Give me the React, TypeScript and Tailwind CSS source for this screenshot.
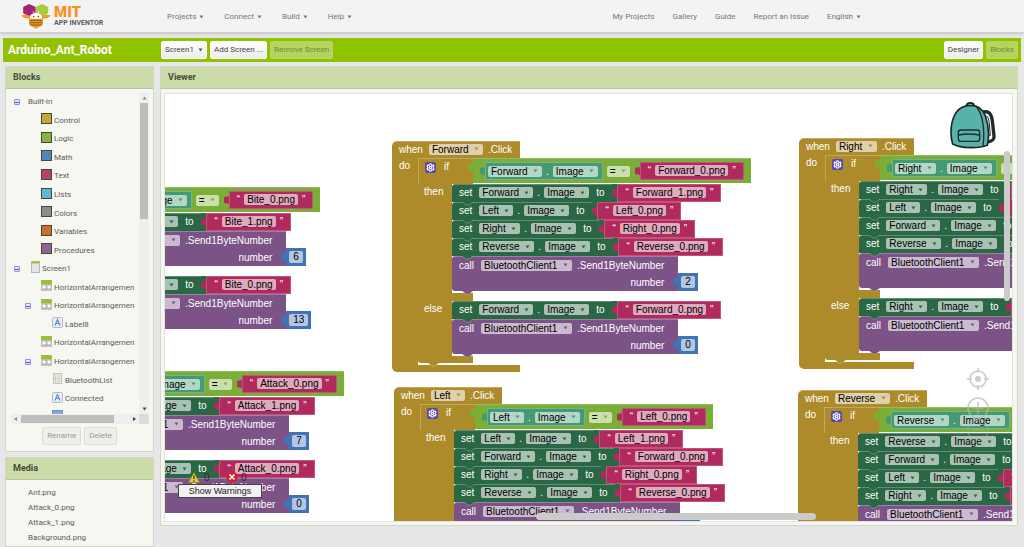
import React from 'react';
import clsx from 'clsx';
import { Settings } from 'lucide-react';

type Tone = { bg: string; fill: string };

const control: Tone = { bg: 'bg-[#ad8b2b]', fill: 'fill-[#ad8b2b]' };
const logic: Tone = { bg: 'bg-[#7bae36]', fill: 'fill-[#7bae36]' };
const math: Tone = { bg: 'bg-[#4173b6]', fill: 'fill-[#4173b6]' };
const textTone: Tone = { bg: 'bg-[#b02a5d]', fill: 'fill-[#b02a5d]' };
const setter: Tone = { bg: 'bg-[#2a6744]', fill: 'fill-[#2a6744]' };
const getter: Tone = { bg: 'bg-[#459a71]', fill: 'fill-[#459a71]' };
const method: Tone = { bg: 'bg-[#7c5386]', fill: 'fill-[#7c5386]' };

const Caret: React.FC<{ className?: string }> = ({ className }) => (
  <svg viewBox="0 0 6 5" className={clsx('h-[4px] w-[5px]', className)} aria-hidden="true">
    <path d="M0.5 0.5H5.5L3 4.5Z" />
  </svg>
);

/* ---------- Block primitives ---------- */

const Notch: React.FC<{ tone: Tone }> = ({ tone }) => (
  <svg viewBox="0 0 11 4" className="absolute top-full left-[10px] z-10 h-[4px] w-[11px]" aria-hidden="true">
    <path d="M0 0L4 3H7L11 0Z" className={tone.fill} />
    <path d="M0 0L4 3H7L11 0" fill="none" stroke="#fff" strokeOpacity="0.3" strokeWidth="0.8" />
  </svg>
);

const Plug: React.FC<{ tone: Tone }> = ({ tone }) => (
  <svg viewBox="0 0 5 10" className="mt-[4px] h-[10px] w-[5px] shrink-0 self-start" aria-hidden="true">
    <path d="M5 0C5 2 3 1.5 1.5 1.5C0 1.5 0 3 0 5C0 7 0 8.5 1.5 8.5C3 8.5 5 8 5 10Z" className={tone.fill} />
  </svg>
);

const Picker: React.FC<{ value: string; tone: Tone; label: string }> = ({ value, tone, label }) => (
  <span className="relative flex items-center">
    <select
      aria-label={label}
      className="h-[11px] appearance-none rounded-[2px] bg-white/60 pr-[14px] pl-[3px] text-[10px] leading-[11px] text-black"
    >
      <option>{value}</option>
    </select>
    <Caret className={clsx('pointer-events-none absolute right-[4px]', tone.fill)} />
  </span>
);

const TextBlock: React.FC<{ value: string }> = ({ value }) => (
  <div className="flex h-[18px]">
    <Plug tone={textTone} />
    <div className={clsx('flex items-center gap-1 border border-white/20 px-[7px] pb-px', textTone.bg)}>
      <span>“</span>
      <input
        aria-label="Text value"
        defaultValue={value}
        className="field-sizing-content h-[11px] rounded-[2px] bg-white/60 px-[3px] text-[10px] leading-[11px] text-black"
      />
      <span>”</span>
    </div>
  </div>
);

const NumberBlock: React.FC<{ value: string }> = ({ value }) => (
  <div className="flex h-[18px]">
    <Plug tone={math} />
    <div className={clsx('flex items-center px-[3px]', math.bg)}>
      <input
        aria-label="Number value"
        defaultValue={value}
        className="field-sizing-content h-[12px] rounded-[2px] bg-white/60 px-1 text-[10px] leading-[12px] text-black"
      />
    </div>
  </div>
);

const SetBlock: React.FC<{ component: string; image: string }> = ({ component, image }) => (
  <div className="relative flex h-[18px]">
    <div className={clsx('flex items-center rounded-tl-[3px] border-t border-white/25 pb-[2px] pl-[7px]', setter.bg)}>
      <span className="mr-[7px]">set</span>
      <Picker value={component} tone={setter} label="Component" />
      <span className="mx-1">.</span>
      <Picker value="Image" tone={setter} label="Property" />
      <span className="mr-2 ml-[7px]">to</span>
    </div>
    <div className={clsx('flex', setter.bg)}>
      <TextBlock value={image} />
    </div>
    <Notch tone={setter} />
  </div>
);

const CallBlock: React.FC<{ number: string }> = ({ number }) => (
  <div className="relative flex h-[35px] items-end">
    <div className={clsx('h-[35px] rounded-l-[3px] border-t border-white/25 pl-[7px]', method.bg)}>
      <div className="flex h-[16px] items-center pr-[14px]">
        <span className="mr-[7px]">call</span>
        <Picker value="BluetoothClient1" tone={method} label="Component" />
        <span className="ml-[5px]">.Send1ByteNumber</span>
      </div>
      <div className="flex h-[18px] items-center justify-end pr-[14px]">number</div>
    </div>
    <div className="-ml-[5px]">
      <NumberBlock value={number} />
    </div>
    <Notch tone={method} />
  </div>
);

const CompareBlock: React.FC<{ component: string; image: string }> = ({ component, image }) => (
  <div className="-ml-[5px] flex h-[25px]">
    <Plug tone={logic} />
    <div className={clsx('flex items-center border-t border-white/20 px-[7px]', logic.bg)}>
      <div className="flex h-[18px]">
        <Plug tone={getter} />
        <div className={clsx('flex items-center border border-white/25 pr-1 pl-[2px]', getter.bg)}>
          <Picker value={component} tone={getter} label="Component" />
          <span className="mx-1">.</span>
          <Picker value="Image" tone={getter} label="Property" />
        </div>
      </div>
      <div className="mr-[5px] ml-1">
        <Picker value="=" tone={logic} label="Comparison" />
      </div>
      <TextBlock value={image} />
    </div>
  </div>
);

type Handler = {
  name: string;
  place: string;
  test: string;
  then: [string, string][];
  thenNumber: string;
  otherwise: string;
  elseNumber: string;
};

const Branch: React.FC<{ label: string; children: React.ReactNode }> = ({ label, children }) => (
  <div className="flex">
    <div className={clsx('w-[34px] shrink-0 pt-[2px] pl-[6px] leading-[12px]', control.bg)}>{label}</div>
    <div className="pb-[2px]">{children}</div>
  </div>
);

const EventBlock: React.FC<{ handler: Handler }> = ({ handler }) => (
  <div className={clsx('absolute grid whitespace-nowrap', handler.place)}>
    {/* Hat */}
    <div className={clsx('flex h-[17px] items-center rounded-tl-[5px] border-t border-white/25 pr-2 pb-[2px] pl-[7px]', control.bg)}>
      <span className="mr-[6px]">when</span>
      <Picker value={handler.name} tone={control} label="Event source" />
      <span className="ml-[5px]">.Click</span>
    </div>
    {/* Body */}
    <div className="flex w-0">
      <div className={clsx('w-[26px] shrink-0 pt-[2px] pl-[7px] leading-[12px]', control.bg)}>do</div>
      <div className="shrink-0 pb-[2px]">
        <div className="relative">
          <div className="flex h-[26px] items-start">
            <div
              className={clsx(
                'flex h-[26px] w-[55px] shrink-0 items-start border-t border-l border-white/25 pt-[3px] pl-[6px]',
                control.bg,
              )}
            >
              <button
                aria-label="Edit if block"
                className="flex h-[11px] w-[11px] items-center justify-center rounded-[2px] bg-[#5847ad] text-white"
              >
                <Settings size={9} strokeWidth={3} />
              </button>
              <span className="ml-2 leading-[10px]">if</span>
            </div>
            <CompareBlock component={handler.name} image={handler.test} />
          </div>
          <Branch label="then">
            {handler.then.map(([component, image]) => (
              <SetBlock key={component} component={component} image={image} />
            ))}
            <CallBlock number={handler.thenNumber} />
          </Branch>
          <div className={clsx('h-[8px] w-[55px]', control.bg)} />
          <Branch label="else">
            <SetBlock component={handler.name} image={handler.otherwise} />
            <CallBlock number={handler.elseNumber} />
          </Branch>
          <div className={clsx('h-[7px] w-[55px] rounded-bl-[3px]', control.bg)} />
          <Notch tone={control} />
        </div>
      </div>
    </div>
    <div className={clsx('h-[7px] rounded-bl-[5px]', control.bg)} />
  </div>
);

const handlers: Handler[] = [
  {
    name: 'Bite',
    place: '-left-[165px] top-[76px]',
    test: 'Bite_0.png',
    then: [['Bite', 'Bite_1.png']],
    thenNumber: '6',
    otherwise: 'Bite_0.png',
    elseNumber: '13',
  },
  {
    name: 'Attack',
    place: '-left-[162px] top-[260px]',
    test: 'Attack_0.png',
    then: [['Attack', 'Attack_1.png']],
    thenNumber: '7',
    otherwise: 'Attack_0.png',
    elseNumber: '0',
  },
  {
    name: 'Forward',
    place: 'left-[227px] top-[47px]',
    test: 'Forward_0.png',
    then: [
      ['Forward', 'Forward_1.png'],
      ['Left', 'Left_0.png'],
      ['Right', 'Right_0.png'],
      ['Reverse', 'Reverse_0.png'],
    ],
    thenNumber: '2',
    otherwise: 'Forward_0.png',
    elseNumber: '0',
  },
  {
    name: 'Left',
    place: 'left-[229px] top-[293px]',
    test: 'Left_0.png',
    then: [
      ['Left', 'Left_1.png'],
      ['Forward', 'Forward_0.png'],
      ['Right', 'Right_0.png'],
      ['Reverse', 'Reverse_0.png'],
    ],
    thenNumber: '4',
    otherwise: 'Left_0.png',
    elseNumber: '0',
  },
  {
    name: 'Right',
    place: 'left-[634px] top-[44px]',
    test: 'Right_0.png',
    then: [
      ['Right', 'Right_1.png'],
      ['Left', 'Left_0.png'],
      ['Forward', 'Forward_0.png'],
      ['Reverse', 'Reverse_0.png'],
    ],
    thenNumber: '3',
    otherwise: 'Right_0.png',
    elseNumber: '0',
  },
  {
    name: 'Reverse',
    place: 'left-[633px] top-[296px]',
    test: 'Reverse_0.png',
    then: [
      ['Reverse', 'Reverse_1.png'],
      ['Forward', 'Forward_0.png'],
      ['Left', 'Left_0.png'],
      ['Right', 'Right_0.png'],
    ],
    thenNumber: '5',
    otherwise: 'Reverse_0.png',
    elseNumber: '0',
  },
];

/* ---------- Workspace overlays ---------- */

const Backpack: React.FC = () => (
  <svg viewBox="0 0 138 142" className="h-[48px] w-[46px]" aria-hidden="true">
    <path d="M100 32C118 28 124 38 127 58L132 104C133 116 126 120 112 122" fill="none" stroke="#1f2a2c" strokeWidth="10" />
    <path d="M106 44C114 42 116 54 118 66L121 102L112 106Z" fill="#e8eeee" stroke="#1f2a2c" strokeWidth="3" />
    <path d="M50 14C50 2 72 2 72 14" fill="none" stroke="#1f2a2c" strokeWidth="6" />
    <path
      d="M8 128C-1 100 2 58 18 34C30 16 46 12 62 12C84 12 98 22 106 44C116 72 118 104 112 132C86 142 34 142 8 128Z"
      fill="#57b3aa"
      stroke="#1f2a2c"
      strokeWidth="5"
    />
    <path d="M78 15C96 34 106 80 99 136" fill="none" stroke="#1f2a2c" strokeWidth="4" />
    <rect x="25" y="86" width="64" height="34" rx="8" fill="#57b3aa" stroke="#1f2a2c" strokeWidth="4" />
    <path d="M26 101C46 97 68 97 88 101" fill="none" stroke="#1f2a2c" strokeWidth="4" />
  </svg>
);

const WorkspaceControls: React.FC = () => (
  <div className="absolute right-[22px] bottom-[80px] flex flex-col items-center text-[#b8b8b8] opacity-70">
    <button aria-label="Center blocks" className="h-[22px] w-[24px]">
      <svg viewBox="0 0 24 22" fill="none" stroke="currentColor" strokeWidth="1.6">
        <circle cx="12" cy="11" r="8" />
        <circle cx="12" cy="11" r="3" fill="currentColor" stroke="none" />
        <path d="M12 0V5M12 17V22M1 11H6M18 11H23" />
      </svg>
    </button>
    <button aria-label="Zoom in" className="mt-[7px] h-[22px] w-[24px]">
      <svg viewBox="0 0 24 22" fill="none" stroke="currentColor" strokeWidth="1.6">
        <circle cx="12" cy="11" r="10" />
        <path d="M12 5V17M6 11H18" />
      </svg>
    </button>
    <button aria-label="Zoom out" className="h-[22px] w-[24px] opacity-40">
      <svg viewBox="0 0 24 22" fill="none" stroke="currentColor" strokeWidth="1.6">
        <circle cx="12" cy="11" r="10" />
        <path d="M6 11H18" />
      </svg>
    </button>
  </div>
);

const Warnings: React.FC = () => (
  <div className="absolute bottom-[23px] left-[13px] text-[10px] text-[#3b2140]">
    <div className="flex h-[14px] items-center pl-[10px]">
      <svg viewBox="0 0 12 11" className="h-[11px] w-[12px]" aria-hidden="true">
        <path d="M6 0.5L11.5 10.5H0.5Z" fill="#dccb3d" stroke="#8f8426" strokeWidth="0.6" />
        <path d="M6 3.5V7M6 8.2V9.4" stroke="#3d3a12" strokeWidth="1.2" />
      </svg>
      <span className="ml-1 w-[20px]">0</span>
      <svg viewBox="0 0 12 12" className="ml-[2px] h-[12px] w-[12px]" aria-hidden="true">
        <circle cx="6" cy="6" r="5.6" fill="#d3202c" />
        <path d="M3.5 3.5L8.5 8.5M8.5 3.5L3.5 8.5" stroke="#fff" strokeWidth="1.6" />
      </svg>
      <span className="ml-[3px]">0</span>
    </div>
    <button className="flex h-[14px] w-[84px] items-center justify-center border border-[#444] bg-[#f1f1f1] text-[9px] text-[#222]">
      Show Warnings
    </button>
  </div>
);

/* ---------- Chrome ---------- */

const Logo: React.FC = () => (
  <a href="#home" className="flex w-[146px] shrink-0 items-center gap-[3px]">
    <svg viewBox="0 0 90 76" className="h-[25px] w-[30px]" aria-hidden="true">
      <path d="M24 0L44 9V28L26 38L6 28V9Z" fill="#a5217b" />
      <path d="M64 0L82 9V28L64 38L44 28V9Z" fill="#a9cc3a" />
      <path d="M0 36C8 31 20 32 30 38L28 44C16 46 6 42 0 36Z" fill="#f49a20" />
      <path d="M90 36C82 31 70 32 60 38L62 44C74 46 84 42 90 36Z" fill="#f49a20" />
      <path d="M36 22L41 30M54 22L49 30" stroke="#fff" strokeWidth="2.5" />
      <path d="M27 44C24 32 34 28 45 28C56 28 66 32 63 44Z" fill="#fff" />
      <circle cx="38" cy="38" r="2.5" fill="#5b4a36" />
      <circle cx="52" cy="38" r="2.5" fill="#5b4a36" />
      <path d="M25 45H65L66 62L45 75L24 62Z" fill="#f49a20" />
      <path d="M25 50H65M25 57H65M27 64H63" stroke="#6d4a23" strokeWidth="2.5" />
    </svg>
    <span className="flex flex-col items-start pt-px">
      <span className="text-[15px] leading-[13px] font-black text-[#f5921e]">MIT</span>
      <span className="text-[7px] leading-[9px] font-bold whitespace-nowrap text-[#5d5d5d]">APP INVENTOR</span>
    </span>
  </a>
);

const menus = ['Projects', 'Connect', 'Build', 'Help'];
const links = ['My Projects', 'Gallery', 'Guide', 'Report an Issue'];

const MenuButton: React.FC<{ label: string }> = ({ label }) => (
  <button className="flex items-center gap-[3px] whitespace-nowrap">
    {label}
    <Caret className="fill-[#777]" />
  </button>
);

const BarButton: React.FC<{ disabled?: boolean; children: React.ReactNode }> = ({ disabled, children }) => (
  <button
    disabled={disabled}
    className={clsx(
      'flex h-[18px] items-center gap-1 rounded-[2px] border px-[3px] whitespace-nowrap',
      disabled
        ? 'border-[#b4d566] bg-[#b4d45f] text-[#6f8b35]'
        : 'border-white bg-gradient-to-b from-white to-[#ececec] text-[#444]',
    )}
  >
    {children}
  </button>
);

const PanelTitle: React.FC<{ children: React.ReactNode }> = ({ children }) => (
  <h2 className="flex h-[22px] shrink-0 items-center border-b border-[#b9c2a2] bg-[#ccdca8] pl-[7px] text-[9px] font-bold text-[#454b39]">
    {children}
  </h2>
);

const ComponentIcon: React.FC<{ kind: string }> = ({ kind }) => {
  if (kind === 'arrangement') {
    return (
      <svg viewBox="0 0 11 11" className="h-[11px] w-[11px]" aria-hidden="true">
        <rect x="0.5" y="0.5" width="10" height="10" fill="#b9bbb2" stroke="#c3c5bb" />
        <rect x="0" y="0" width="11" height="4" fill="#96c22f" />
        <rect x="1.5" y="5.5" width="3" height="3" rx="1" fill="#fff" />
        <rect x="6.5" y="5.5" width="3" height="3" rx="1" fill="#fff" />
      </svg>
    );
  }
  if (kind === 'label') {
    return (
      <svg viewBox="0 0 11 11" className="h-[11px] w-[11px]" aria-hidden="true">
        <rect x="0.5" y="0.5" width="10" height="10" rx="1" fill="#e9edf3" stroke="#b5b9c0" />
        <path d="M3 8.5L5.5 2.5L8 8.5M4 6.5H7" fill="none" stroke="#5c8fd8" strokeWidth="1.2" />
      </svg>
    );
  }
  if (kind === 'list') {
    return (
      <svg viewBox="0 0 11 11" className="h-[11px] w-[11px]" aria-hidden="true">
        <rect x="1.5" y="0.5" width="8" height="10" fill="#e9eae4" stroke="#c2c5bc" />
        <path d="M3 3H4M3 5.5H4M3 8H4" stroke="#8fbf2c" />
        <path d="M5 3H8M5 5.5H8M5 8H8" stroke="#c6c8c0" />
      </svg>
    );
  }
  if (kind === 'button') {
    return (
      <svg viewBox="0 0 11 11" className="h-[11px] w-[11px]" aria-hidden="true">
        <rect x="0.5" y="0.5" width="10" height="10" fill="#7fa9e0" stroke="#6f8fbd" />
      </svg>
    );
  }
  return (
    <svg viewBox="0 0 9 12" className="h-[12px] w-[9px]" aria-hidden="true">
      <rect x="0.5" y="0.5" width="8" height="11" fill="#e6e7e0" stroke="#b5b8ae" />
      <rect x="0.5" y="0.5" width="8" height="2" fill="#9cc63c" />
    </svg>
  );
};

const Toggle: React.FC<{ name: string }> = ({ name }) => (
  <button
    aria-label={`Collapse ${name}`}
    className="flex h-[6px] w-[6px] items-center justify-center rounded-[1px] border border-[#8f93d8] bg-[#e4e5fb]"
  >
    <span className="h-px w-[4px] bg-[#5257c8]" />
  </button>
);

const tree = [
  { name: 'Built-in', indent: 'pl-[3px]', open: true },
  { name: 'Control', indent: 'pl-[30px]', swatch: 'bg-[#c4a63b]' },
  { name: 'Logic', indent: 'pl-[30px]', swatch: 'bg-[#84b546]' },
  { name: 'Math', indent: 'pl-[30px]', swatch: 'bg-[#5585bd]' },
  { name: 'Text', indent: 'pl-[30px]', swatch: 'bg-[#b8406e]' },
  { name: 'Lists', indent: 'pl-[30px]', swatch: 'bg-[#5fb5da]' },
  { name: 'Colors', indent: 'pl-[30px]', swatch: 'bg-[#8c8c8c]' },
  { name: 'Variables', indent: 'pl-[30px]', swatch: 'bg-[#d06e2f]' },
  { name: 'Procedures', indent: 'pl-[30px]', swatch: 'bg-[#8a6595]' },
  { name: 'Screen1', indent: 'pl-[3px]', open: true, icon: 'screen' },
  { name: 'HorizontalArrangemen', indent: 'pl-[30px]', icon: 'arrangement' },
  { name: 'HorizontalArrangemen', indent: 'pl-[14px]', open: true, icon: 'arrangement' },
  { name: 'Label8', indent: 'pl-[41px]', icon: 'label' },
  { name: 'HorizontalArrangemen', indent: 'pl-[30px]', icon: 'arrangement' },
  { name: 'HorizontalArrangemen', indent: 'pl-[14px]', open: true, icon: 'arrangement' },
  { name: 'BluetoothList', indent: 'pl-[41px]', icon: 'list' },
  { name: 'Connected', indent: 'pl-[41px]', icon: 'label' },
  { name: 'Disconnect', indent: 'pl-[41px]', icon: 'button' },
];

const media = ['Ant.png', 'Attack_0.png', 'Attack_1.png', 'Background.png'];

const BlocksPanel: React.FC = () => (
  <section className="flex min-h-0 flex-1 flex-col border border-[#d3d5cd] bg-[#f6f7f0]">
    <PanelTitle>Blocks</PanelTitle>
    <div className="mt-1 mr-1 ml-[5px] flex min-h-0 flex-1">
      <div className="min-w-0 flex-1 overflow-hidden">
        <ul className="grid h-[334px] auto-rows-fr">
          {tree.map((node, i) => (
            <li key={i} className={clsx('flex items-center whitespace-nowrap', node.indent)}>
              {node.open && <Toggle name={node.name} />}
              {node.open && <span className={node.icon === 'screen' ? 'w-[11px]' : node.icon ? 'w-[10px]' : 'w-[6px]'} />}
              {node.swatch && <span className={clsx('mb-1 h-[11px] w-[11px] border border-[#4a4634]', node.swatch)} />}
              {node.icon && (
                <span className="mb-1">
                  <ComponentIcon kind={node.icon} />
                </span>
              )}
              <a href="#block" className="ml-[2px]">
                {node.name}
              </a>
            </li>
          ))}
        </ul>
      </div>
      {/* Vertical scrollbar */}
      <div className="flex w-[10px] shrink-0 flex-col items-center bg-[#efefef] py-[3px]">
        <Caret className="rotate-180 fill-[#8a8a8a]" />
        <div className="mt-[3px] h-[116px] w-[8px] bg-[#bdbdbd]" />
        <Caret className="mt-auto fill-[#444]" />
      </div>
    </div>
    {/* Horizontal scrollbar */}
    <div className="mr-1 ml-[5px] flex h-[10px] shrink-0">
      <div className="flex min-w-0 flex-1 items-center bg-[#efefef] px-[2px]">
        <Caret className="rotate-90 fill-[#8a8a8a]" />
        <div className="ml-[3px] h-[8px] w-[93px] bg-[#bdbdbd]" />
        <Caret className="ml-auto -rotate-90 fill-[#444]" />
      </div>
      <div className="w-[10px] bg-[#dcdcdc]" />
    </div>
    <div className="flex shrink-0 justify-center gap-[3px] pt-[3px] pb-[6px] text-[#999]">
      {['Rename', 'Delete'].map((label) => (
        <button key={label} className="h-[18px] rounded-[2px] border border-[#dcdcd8] bg-[#efefeb] px-1">
          {label}
        </button>
      ))}
    </div>
  </section>
);

const App: React.FC = () => (
  <div className="flex h-screen flex-col overflow-hidden bg-[#e7e7e7] font-['Roboto',sans-serif] text-[8px] text-[#5c5c5c]">
    <header className="flex h-[33px] shrink-0 items-center border-b border-[#d2d2d2] bg-[#f3f3f3] pl-[21px] text-[#777] shadow-sm">
      <Logo />
      <nav className="flex flex-1 items-center gap-5 pt-[2px]">
        {menus.map((label) => (
          <MenuButton key={label} label={label} />
        ))}
      </nav>
      <nav className="mr-[163px] flex items-center gap-[18px] pt-[2px] whitespace-nowrap">
        {links.map((label) => (
          <a key={label} href="#link">
            {label}
          </a>
        ))}
        <MenuButton label="English" />
      </nav>
    </header>

    <div className="mx-[3px] mt-[5px] flex h-[24px] shrink-0 items-center gap-[3px] bg-[#90c200] pr-[3px] pl-[5px]">
      <h1 className="w-[150px] text-[12px] font-bold text-white">Arduino_Ant_Robot</h1>
      <BarButton>
        Screen1
        <Caret className="fill-[#555]" />
      </BarButton>
      <BarButton>Add Screen ...</BarButton>
      <BarButton disabled>Remove Screen</BarButton>
      <div className="ml-auto flex gap-[3px]">
        <BarButton>Designer</BarButton>
        <BarButton disabled>Blocks</BarButton>
      </div>
    </div>

    <main className="flex min-h-0 flex-1 gap-[6px] pt-[4px] pr-[6px] pl-[5px]">
      <aside className="flex w-[149px] shrink-0 flex-col gap-[5px]">
        <BlocksPanel />
        <section className="h-[90px] shrink-0 overflow-hidden border border-[#d3d5cd] bg-[#f6f7f0]">
          <PanelTitle>Media</PanelTitle>
          <ul className="pt-[5px] pl-[22px] leading-[15px]">
            {media.map((file) => (
              <li key={file}>
                <a href="#media">{file}</a>
              </li>
            ))}
          </ul>
        </section>
      </aside>

      <section className="mb-[21px] flex min-w-0 flex-1 flex-col border border-[#d3d5cd] bg-[#f6f7f0]">
        <PanelTitle>Viewer</PanelTitle>
        <div className="relative mt-1 mr-1 mb-[3px] ml-[3px] flex-1 overflow-hidden border border-[#e3e3e0] bg-white font-['Liberation_Sans',Arial,sans-serif] text-[10px] leading-[11px] text-white">
          {handlers.map((handler) => (
            <EventBlock key={handler.name} handler={handler} />
          ))}
          <button aria-label="Backpack" className="absolute top-[7px] right-4">
            <Backpack />
          </button>
          <WorkspaceControls />
          <Warnings />
          <div className="absolute top-[57px] right-[2px] z-20 h-[150px] w-[6px] rounded-full bg-[#cbcbcb]" />
          <div className="absolute bottom-[1px] left-[371px] z-20 h-[7px] w-[280px] rounded-full bg-[#cbcbcb]" />
        </div>
      </section>
    </main>
  </div>
);

export default App;
